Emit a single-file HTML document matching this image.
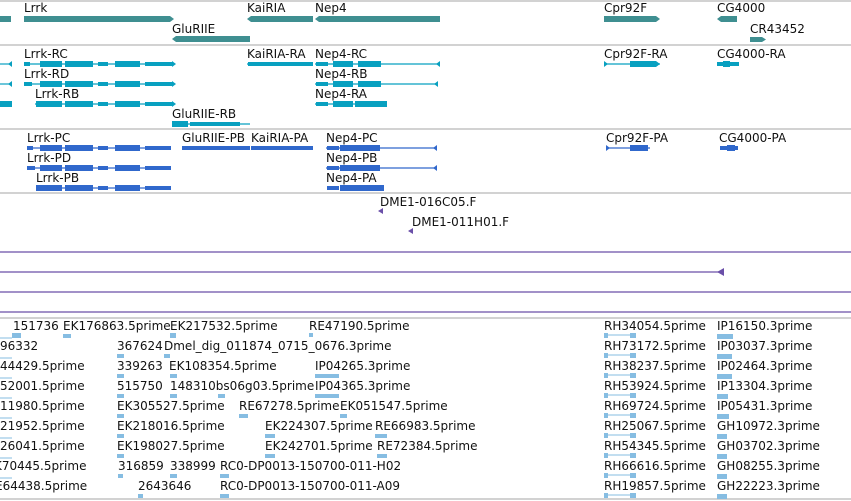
<!DOCTYPE html>
<html><head><meta charset="utf-8"><style>
html,body{margin:0;padding:0;background:#fff;width:851px;height:501px;overflow:hidden}
svg{display:block}
text{font-family:"DejaVu Sans","Liberation Sans",sans-serif;font-size:12px;fill:#111}
</style></head><body>
<svg width="851" height="501" viewBox="0 0 851 501" xmlns="http://www.w3.org/2000/svg">
<g stroke="#c4c4c4" stroke-width="1.5">
<line x1="0" y1="1" x2="851" y2="1"/><line x1="0" y1="45" x2="851" y2="45"/>
<line x1="0" y1="129" x2="851" y2="129"/><line x1="0" y1="193" x2="851" y2="193"/>
<line x1="0" y1="318" x2="851" y2="318"/><line x1="0" y1="499" x2="851" y2="499"/>
</g>
<g fill="#3f8f91">
<rect x="0" y="16" width="11" height="6"/>
<polygon points="24,16 170,16 174,19 170,22 24,22"/>
<polygon points="247,19 251,16 313,16 313,22 251,22"/>
<polygon points="315,19 319,16 440,16 440,22 319,22"/>
<polygon points="172,39 176,36 250,36 250,42 176,42"/>
<polygon points="604,16 656,16 660,19 656,22 604,22"/>
<polygon points="717,19 721,16 737,16 737,22 721,22"/>
<polygon points="750,37 762,37 766,39.5 762,42 750,42"/>
</g>
<text x="24" y="12">Lrrk</text><text x="247" y="12">KaiRIA</text><text x="315" y="12">Nep4</text>
<text x="172" y="33">GluRIIE</text><text x="604" y="12">Cpr92F</text><text x="717" y="12">CG4000</text>
<text x="750" y="33">CR43452</text>
<g fill="#08a0c0" stroke="#08a0c0">
<g stroke-width="1.2"><line x1="0" y1="64" x2="12" y2="64"/><line x1="0" y1="84" x2="12" y2="84"/>
<line x1="24" y1="64" x2="172" y2="64"/><line x1="24" y1="84" x2="172" y2="84"/><line x1="35" y1="104" x2="172" y2="104"/>
<line x1="315" y1="64" x2="440" y2="64"/><line x1="315" y1="84" x2="438" y2="84"/><line x1="315" y1="104" x2="387" y2="104"/>
<line x1="604" y1="64" x2="660" y2="64"/><line x1="172" y1="124" x2="250" y2="124"/><line x1="247" y1="64" x2="313" y2="64"/></g>
<g stroke="none">
<rect x="40" y="61" width="22" height="6"/><rect x="65" y="61" width="28" height="6"/><rect x="98" y="62" width="10" height="4"/><rect x="115" y="61" width="25" height="6"/><rect x="145" y="62" width="27" height="4"/>
<rect x="24" y="62" width="6" height="4"/><rect x="40" y="81" width="22" height="6"/><rect x="65" y="81" width="28" height="6"/><rect x="98" y="82" width="10" height="4"/><rect x="115" y="81" width="25" height="6"/><rect x="145" y="82" width="27" height="4"/><rect x="24" y="82" width="8" height="4"/>
<rect x="36" y="101" width="26" height="6"/><rect x="65" y="101" width="28" height="6"/><rect x="98" y="102" width="10" height="4"/><rect x="115" y="101" width="25" height="6"/><rect x="145" y="102" width="27" height="4"/>
<rect x="0" y="101" width="12" height="6"/>
<rect x="172" y="121" width="16" height="6"/><rect x="190" y="122" width="50" height="4"/>
<rect x="248" y="62" width="65" height="4"/>
<rect x="316" y="62" width="12" height="4"/><rect x="333" y="61" width="20" height="6"/><rect x="358" y="61" width="23" height="6"/>
<rect x="316" y="82" width="12" height="4"/><rect x="333" y="81" width="20" height="6"/><rect x="358" y="81" width="23" height="6"/>
<rect x="316" y="102" width="12" height="4"/><rect x="333" y="101" width="20" height="6"/><rect x="355" y="101" width="32" height="6"/>
<rect x="630" y="61" width="26" height="6"/><rect x="717" y="62" width="22" height="4"/><rect x="723" y="61" width="7" height="6"/>
<polygon points="172,61 176,64 172,67"/><polygon points="172,81 176,84 172,87"/><polygon points="172,101 176,104 172,107"/>
<polygon points="12,61 8,64 12,67"/><polygon points="12,81 8,84 12,87"/><polygon points="440,61 436,64 440,67"/><polygon points="438,81 434,84 438,87"/>
<polygon points="604,61 608,64 604,67"/><polygon points="656,61 660,64 656,67"/>
</g></g>
<text x="24" y="58">Lrrk-RC</text><text x="24" y="78">Lrrk-RD</text><text x="35" y="98">Lrrk-RB</text>
<text x="172" y="118">GluRIIE-RB</text><text x="247" y="58">KaiRIA-RA</text>
<text x="315" y="58">Nep4-RC</text><text x="315" y="78">Nep4-RB</text><text x="315" y="98">Nep4-RA</text>
<text x="604" y="58">Cpr92F-RA</text><text x="717" y="58">CG4000-RA</text>
<g fill="#3068cc" stroke="#3068cc">
<g stroke-width="1.2"><line x1="27" y1="148" x2="171" y2="148"/><line x1="27" y1="168" x2="171" y2="168"/><line x1="36" y1="188" x2="171" y2="188"/>
<line x1="326" y1="148" x2="437" y2="148"/><line x1="326" y1="168" x2="437" y2="168"/><line x1="606" y1="148" x2="650" y2="148"/>
<line x1="182" y1="148" x2="250" y2="148"/><line x1="251" y1="148" x2="313" y2="148"/></g>
<g stroke="none">
<rect x="27" y="146" width="6" height="4"/><rect x="40" y="145" width="22" height="6"/><rect x="65" y="145" width="28" height="6"/><rect x="98" y="146" width="10" height="4"/><rect x="115" y="145" width="25" height="6"/><rect x="145" y="146" width="26" height="4"/>
<rect x="27" y="166" width="8" height="4"/><rect x="40" y="165" width="22" height="6"/><rect x="65" y="165" width="28" height="6"/><rect x="98" y="166" width="10" height="4"/><rect x="115" y="165" width="25" height="6"/><rect x="145" y="166" width="26" height="4"/>
<rect x="36" y="185" width="26" height="6"/><rect x="65" y="185" width="28" height="6"/><rect x="98" y="186" width="10" height="4"/><rect x="115" y="185" width="25" height="6"/><rect x="145" y="186" width="26" height="4"/>
<rect x="182" y="146" width="68" height="4"/><rect x="251" y="146" width="62" height="4"/>
<rect x="327" y="146" width="12" height="4"/><rect x="340" y="145" width="14" height="6"/><rect x="353" y="145" width="27" height="6"/>
<rect x="327" y="166" width="12" height="4"/><rect x="340" y="165" width="14" height="6"/><rect x="353" y="165" width="27" height="6"/>
<rect x="327" y="186" width="12" height="4"/><rect x="340" y="185" width="14" height="6"/><rect x="353" y="185" width="31" height="6"/>
<rect x="630" y="145" width="18" height="6"/><rect x="720" y="146" width="18" height="4"/><rect x="727" y="145" width="8" height="6"/>
<polygon points="437,145 433,148 437,151"/><polygon points="437,165 433,168 437,171"/><polygon points="606,145 610,148 606,151"/>
</g></g>
<text x="27" y="142">Lrrk-PC</text><text x="27" y="162">Lrrk-PD</text><text x="36" y="182">Lrrk-PB</text>
<text x="182" y="142">GluRIIE-PB</text><text x="251" y="142">KaiRIA-PA</text>
<text x="326" y="142">Nep4-PC</text><text x="326" y="162">Nep4-PB</text><text x="326" y="182">Nep4-PA</text>
<text x="606" y="142">Cpr92F-PA</text><text x="719" y="142">CG4000-PA</text>
<text x="380" y="206">DME1-016C05.F</text><text x="412" y="226">DME1-011H01.F</text>
<g fill="#6a4fa8"><polygon points="378,211 383,208 383,214"/><polygon points="408,231 413,228 413,234"/><polygon points="717,272 724,268 724,276"/></g>
<g stroke="#6a4fa8" stroke-width="1.3"><line x1="0" y1="252" x2="851" y2="252"/><line x1="0" y1="272" x2="720" y2="272"/><line x1="0" y1="292" x2="851" y2="292"/><line x1="0" y1="312" x2="851" y2="312"/></g>
<g>
<text x="13" y="330">151736</text><text x="63" y="330">EK176863.5prime</text><text x="170" y="330">EK217532.5prime</text><text x="309" y="330">RE47190.5prime</text>
<text x="0" y="350">96332</text><text x="117" y="350">367624</text><text x="164" y="350">Dmel_dig_011874_0715_0676.3prime</text>
<text x="0" y="370">44429.5prime</text><text x="117" y="370">339263</text><text x="169" y="370">EK108354.5prime</text><text x="315" y="370">IP04265.3prime</text>
<text x="0" y="390">52001.5prime</text><text x="117" y="390">515750</text><text x="170" y="390">148310bs06g03.5prime</text><text x="315" y="390">IP04365.3prime</text>
<text x="0" y="410">11980.5prime</text><text x="117" y="410">EK305527.5prime</text><text x="239" y="410">RE67278.5prime</text><text x="340" y="410">EK051547.5prime</text>
<text x="0" y="430">21952.5prime</text><text x="117" y="430">EK218016.5prime</text><text x="265" y="430">EK224307.5prime</text><text x="375" y="430">RE66983.5prime</text>
<text x="0" y="450">26041.5prime</text><text x="117" y="450">EK198027.5prime</text><text x="265" y="450">EK242701.5prime</text><text x="377" y="450">RE72384.5prime</text>
<text x="-6" y="470">K70445.5prime</text><text x="118" y="470">316859</text><text x="170" y="470">338999</text><text x="220" y="470">RC0-DP0013-150700-011-H02</text>
<text x="-5" y="490">E64438.5prime</text><text x="138" y="490">2643646</text><text x="220" y="490">RC0-DP0013-150700-011-A09</text>
<text x="604" y="330">RH34054.5prime</text><text x="717" y="330">IP16150.3prime</text>
<text x="604" y="350">RH73172.5prime</text><text x="717" y="350">IP03037.3prime</text>
<text x="604" y="370">RH38237.5prime</text><text x="717" y="370">IP02464.3prime</text>
<text x="604" y="390">RH53924.5prime</text><text x="717" y="390">IP13304.3prime</text>
<text x="604" y="410">RH69724.5prime</text><text x="717" y="410">IP05431.3prime</text>
<text x="604" y="430">RH25067.5prime</text><text x="717" y="430">GH10972.3prime</text>
<text x="604" y="450">RH54345.5prime</text><text x="717" y="450">GH03702.3prime</text>
<text x="604" y="470">RH66616.5prime</text><text x="717" y="470">GH08255.3prime</text>
<text x="604" y="490">RH19857.5prime</text><text x="717" y="490">GH22223.3prime</text>
</g>
<g fill="#86bde2" stroke="#86bde2" stroke-width="1">
<line x1="604" y1="335" x2="636" y2="335"/><line x1="604" y1="355" x2="636" y2="355"/><line x1="604" y1="375" x2="636" y2="375"/><line x1="604" y1="395" x2="636" y2="395"/><line x1="604" y1="415" x2="636" y2="415"/><line x1="604" y1="435" x2="636" y2="435"/><line x1="604" y1="455" x2="636" y2="455"/><line x1="604" y1="475" x2="636" y2="475"/><line x1="604" y1="495" x2="636" y2="495"/>
<line x1="0" y1="338" x2="12" y2="338"/><line x1="0" y1="358" x2="12" y2="358"/><line x1="0" y1="378" x2="12" y2="378"/><line x1="0" y1="398" x2="12" y2="398"/><line x1="0" y1="418" x2="12" y2="418"/><line x1="0" y1="438" x2="12" y2="438"/><line x1="0" y1="458" x2="12" y2="458"/><line x1="0" y1="478" x2="12" y2="478"/>
<g stroke="none">
<rect x="604" y="333" width="4" height="5"/><rect x="630" y="333" width="6" height="5"/><rect x="604" y="353" width="4" height="5"/><rect x="630" y="353" width="6" height="5"/><rect x="604" y="373" width="4" height="5"/><rect x="630" y="373" width="6" height="5"/><rect x="604" y="393" width="4" height="5"/><rect x="630" y="393" width="6" height="5"/><rect x="604" y="413" width="4" height="5"/><rect x="630" y="413" width="6" height="5"/><rect x="604" y="433" width="4" height="5"/><rect x="630" y="433" width="6" height="5"/><rect x="604" y="453" width="4" height="5"/><rect x="630" y="453" width="6" height="5"/><rect x="604" y="473" width="4" height="5"/><rect x="630" y="473" width="6" height="5"/><rect x="604" y="493" width="4" height="5"/><rect x="630" y="493" width="6" height="5"/>
<rect x="717" y="334" width="16" height="5"/><rect x="717" y="354" width="15" height="5"/><rect x="717" y="374" width="15" height="5"/><rect x="717" y="394" width="11" height="5"/><rect x="717" y="414" width="12" height="5"/><rect x="717" y="434" width="10" height="5"/><rect x="717" y="454" width="10" height="5"/><rect x="717" y="474" width="10" height="5"/><rect x="717" y="494" width="10" height="5"/>
<rect x="12" y="333" width="9" height="5"/><rect x="63" y="334" width="8" height="4"/><rect x="170" y="333" width="6" height="5"/><rect x="309" y="333" width="4" height="4"/>
<rect x="117" y="354" width="7" height="4"/><rect x="164" y="354" width="6" height="4"/>
<rect x="117" y="374" width="7" height="4"/><rect x="170" y="374" width="7" height="4"/><rect x="315" y="374" width="24" height="4"/>
<rect x="117" y="394" width="7" height="4"/><rect x="170" y="394" width="7" height="4"/><rect x="218" y="394" width="7" height="4"/><rect x="315" y="394" width="24" height="4"/>
<rect x="117" y="414" width="7" height="4"/><rect x="239" y="414" width="9" height="4"/><rect x="340" y="414" width="7" height="4"/>
<rect x="117" y="434" width="7" height="4"/><rect x="265" y="434" width="10" height="4"/><rect x="375" y="434" width="12" height="4"/>
<rect x="117" y="454" width="7" height="4"/><rect x="265" y="454" width="10" height="4"/><rect x="377" y="454" width="10" height="4"/>
<rect x="118" y="474" width="5" height="4"/><rect x="170" y="474" width="7" height="4"/><rect x="220" y="474" width="9" height="4"/>
<rect x="138" y="494" width="5" height="4"/><rect x="220" y="494" width="9" height="4"/>
</g></g>
</svg>
</body></html>
